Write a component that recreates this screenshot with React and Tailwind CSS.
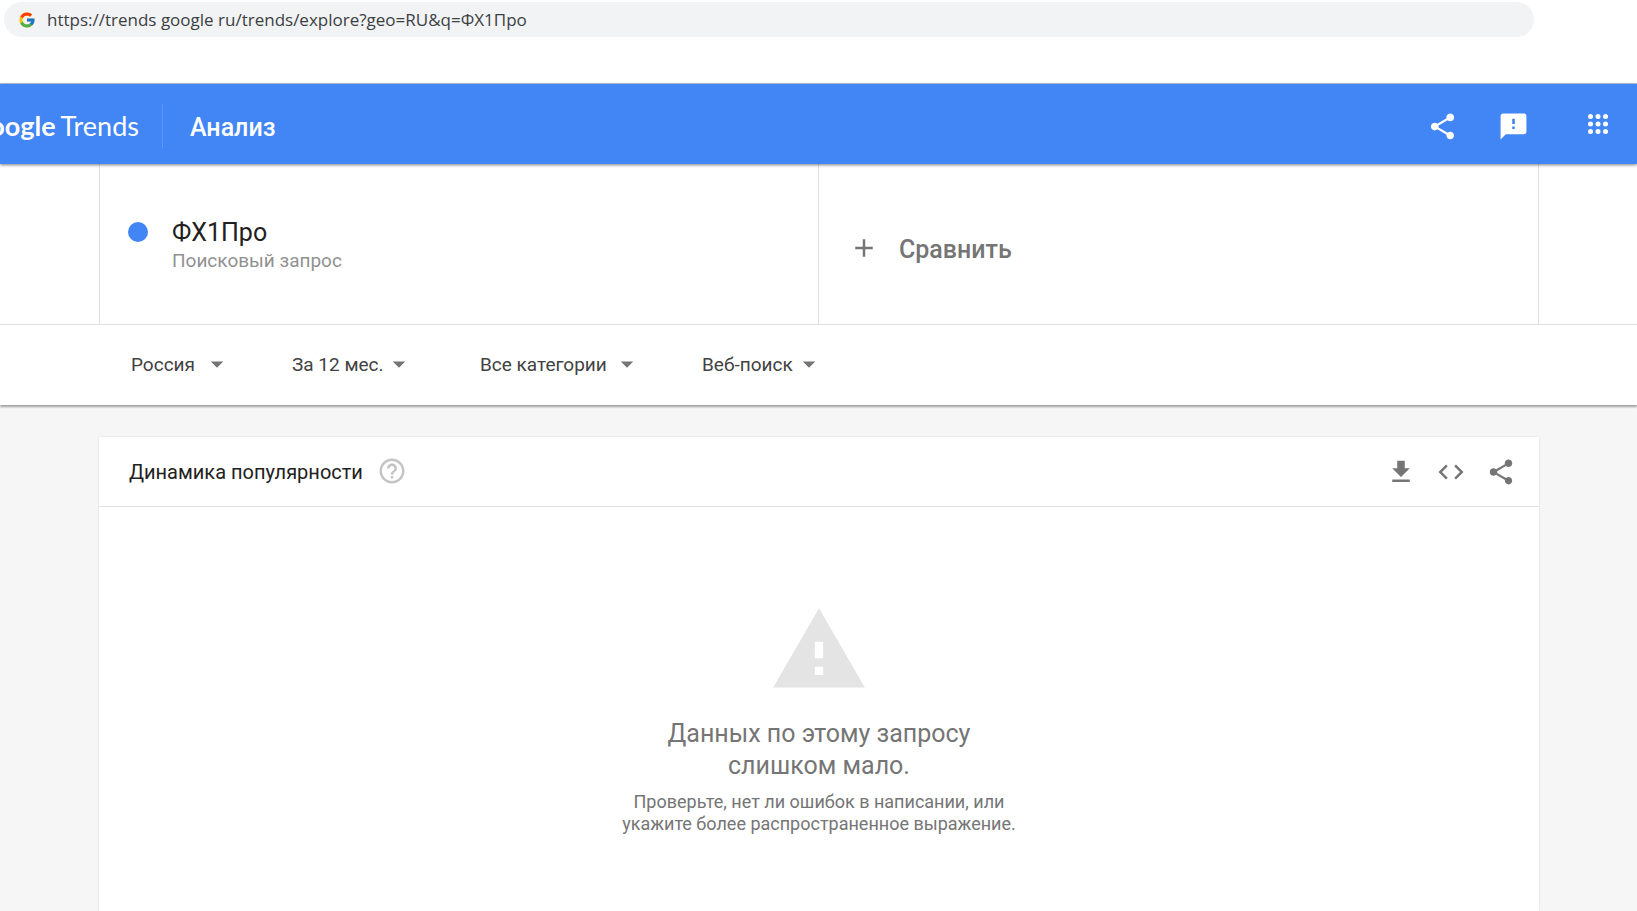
import React from 'react'
import { FcGoogle } from 'react-icons/fc'
import {
  MdAdd,
  MdArrowDropDown,
  MdCode,
  MdFileDownload,
  MdHelpOutline,
  MdShare,
  MdSmsFailed,
  MdWarning
} from 'react-icons/md'

const filters = [
  { id: 'geo', label: 'Регион', value: 'Россия', size: 'w-[93px] mr-[68px]' },
  { id: 'time', label: 'Период', value: 'За 12 мес.', size: 'w-[114px] mr-[74px]' },
  { id: 'category', label: 'Категория', value: 'Все категории', size: 'w-[154px] mr-[68px]' },
  { id: 'property', label: 'Тип поиска', value: 'Веб-поиск', size: 'w-[114px]' }
]

const AppsIcon = () => (
  <svg viewBox="0 0 20 20" className="size-5" fill="currentColor" aria-hidden="true">
    {[2.5, 10, 17.5].map(y =>
      [2.5, 10, 17.5].map(x => <circle key={`${x}-${y}`} cx={x} cy={y} r="2.5" />)
    )}
  </svg>
)

const AddressBar = () => (
  <div className="h-[84px] pt-[2px] pl-1 pr-[103px] border-b border-[#b8c8e6]">
    <div className="flex items-center h-[35px] rounded-full bg-[#f1f3f4] pl-[14px] gap-[11px]">
      <FcGoogle className="size-[18px] shrink-0" />
      <input
        type="text"
        aria-label="Адрес"
        defaultValue="https://trends google ru/trends/explore?geo=RU&q=ФХ1Про"
        className="flex-1 bg-transparent text-[17px] text-[#3c4043] outline-none font-['Open_Sans',sans-serif]"
      />
    </div>
  </div>
)

const Header = () => (
  <header className="relative flex items-center h-20 pt-1 bg-[#4285f4] text-white shadow-[0_1px_3px_rgba(0,0,0,0.5)]">
    <a
      href="#home"
      className="flex justify-end w-[139px] overflow-hidden whitespace-nowrap text-[27px] leading-10 font-['Lato',sans-serif]"
    >
      <span className="font-bold">Google</span>
      <span className="pl-[5px]">Trends</span>
    </a>
    <div className="ml-[23px] w-px h-11 bg-white/15" />
    <h1 className="ml-[27px] pt-1 text-[25px] font-medium">Анализ</h1>
    <div className="flex items-center ml-auto pr-[29px]">
      <button type="button" aria-label="Поделиться">
        <MdShare className="size-[31px]" />
      </button>
      <button type="button" aria-label="Отправить отзыв" className="ml-10">
        <MdSmsFailed className="size-[31px]" />
      </button>
      <button type="button" aria-label="Приложения" className="ml-[59px] pb-1">
        <AppsIcon />
      </button>
    </div>
  </header>
)

const SearchTerms = () => (
  <section className="border-b border-[#e0e0e0] pl-[99px] pr-[98px]">
    <div className="grid grid-cols-2 h-40 border-x border-[#e0e0e0]">
      <div className="flex pt-[51px] pl-7 border-r border-[#e0e0e0]">
        <span className="mt-[7px] size-5 rounded-full bg-[#4285f4]" />
        <div className="ml-6">
          <div className="text-[25px] leading-9 text-[#212121]">ФХ1Про</div>
          <div className="text-[19px] leading-5 text-[#919191]">Поисковый запрос</div>
        </div>
      </div>
      <button type="button" className="flex items-center pl-[30px] pt-2 text-[#757575]">
        <MdAdd className="size-[30px]" />
        <span className="ml-5 pt-1 text-[25px] font-medium">Сравнить</span>
      </button>
    </div>
  </section>
)

const Filters = () => (
  <section className="relative flex items-center h-20 pl-[131px] bg-white shadow-[0_2px_2px_rgba(0,0,0,0.35)]">
    {filters.map(filter => (
      <div key={filter.id} className={`relative ${filter.size}`}>
        <label htmlFor={filter.id} className="sr-only">{filter.label}</label>
        <select
          id={filter.id}
          className="block appearance-none w-full h-8 bg-transparent text-[19px] leading-8 text-[#424242] outline-none"
        >
          <option>{filter.value}</option>
        </select>
        <MdArrowDropDown className="absolute -right-2 top-0 size-[30px] text-[#757575] pointer-events-none" />
      </div>
    ))}
  </section>
)

const TrendCard = () => (
  <section className="flex-1 ml-[99px] mr-[98px] mt-8 bg-white shadow-[0_0_2px_rgba(0,0,0,0.12)]">
    <div className="flex items-center h-[70px] pl-[30px] pr-[23px] border-b border-[#e0e0e0] text-[#757575]">
      <h2 className="text-[20px] text-[#212121]">Динамика популярности</h2>
      <button type="button" aria-label="Справка" className="ml-[14px] pb-[2px] text-[#c4c4c4]">
        <MdHelpOutline className="size-[30px]" />
      </button>
      <div className="flex gap-5 ml-auto">
        <button type="button" aria-label="Скачать">
          <MdFileDownload className="size-[30px]" />
        </button>
        <button type="button" aria-label="Встроить">
          <MdCode className="size-[30px]" />
        </button>
        <button type="button" aria-label="Поделиться графиком">
          <MdShare className="size-[30px]" />
        </button>
      </div>
    </div>
    <div className="flex flex-col items-center pt-[93px] text-center text-[#757575]">
      <MdWarning className="size-[100px] text-[#e4e4e4]" />
      <p className="mt-[18px] text-[25px] leading-8">
        Данных по этому запросу
        <br />
        слишком мало.
      </p>
      <p className="mt-[9px] text-[18px] leading-[22px]">
        Проверьте, нет ли ошибок в написании, или
        <br />
        укажите более распространенное выражение.
      </p>
    </div>
  </section>
)

const App = () => (
  <div className="flex flex-col min-h-screen bg-white font-['Roboto',sans-serif]">
    <AddressBar />
    <Header />
    <SearchTerms />
    <Filters />
    <main className="flex flex-col flex-1 bg-[#f6f6f6]">
      <TrendCard />
    </main>
  </div>
)

export default App
